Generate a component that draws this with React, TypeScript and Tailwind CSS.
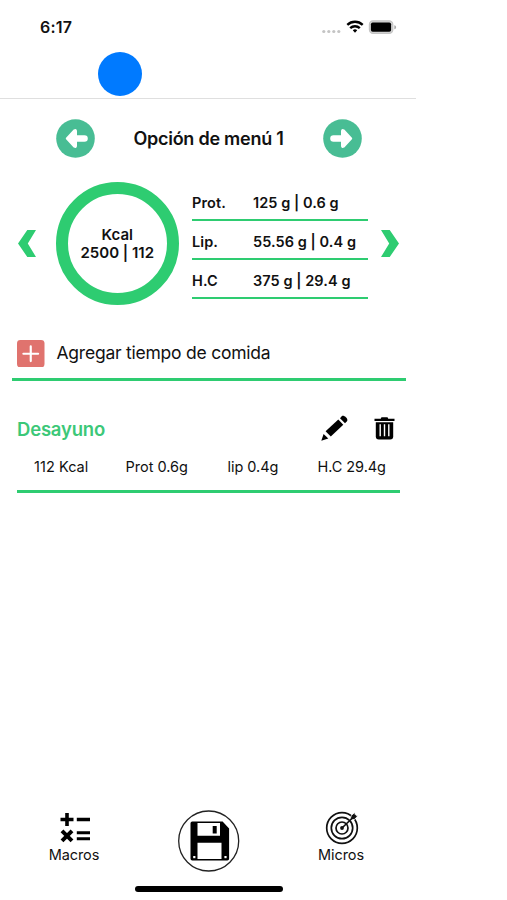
import React from "react";

function StatusBar() {
  return (
    <div className="flex h-[52px] items-start justify-between pt-[17px] pr-[19px] pl-[40px]">
      <span className="text-[16px] leading-[20px] font-semibold tracking-[0.2px]">6:17</span>
      <svg className="mt-[1px] h-[18px] w-[76px]" viewBox="0 0 76 18">
        <g fill="#c4c4c4">
          <circle cx="2.8" cy="13.5" r="1.6" />
          <circle cx="7.8" cy="13.5" r="1.6" />
          <circle cx="12.8" cy="13.5" r="1.6" />
          <circle cx="17.8" cy="13.5" r="1.6" />
        </g>
        <g fill="none" stroke="#000" strokeWidth="2.4">
          <path d="M26.3 6.8a11.3 11.3 0 0 1 15.4 0" />
          <path d="M29.2 10.1a7 7 0 0 1 9.6 0" />
        </g>
        <path d="M31.8 12.3a3.3 3.3 0 0 1 4.4 0L34 14.8z" fill="#000" />
        <rect x="48.4" y="2.9" width="23.4" height="12.4" rx="3.6" fill="#d4d4d4" stroke="#c4c4c4" strokeWidth="1.2" />
        <rect x="49.9" y="4.5" width="20.2" height="9.2" rx="1.8" fill="#000" />
        <path d="M73.3 7.2v4c1.3-.4 1.8-1.1 1.8-2s-.5-1.6-1.8-2z" fill="#aaa" />
      </svg>
    </div>
  );
}

function ArrowButton({ right = false }: { right?: boolean }) {
  return (
    <svg className={right ? "h-[39px] w-[39px] rotate-180" : "h-[39px] w-[39px]"} viewBox="0 0 39 39">
      <circle cx="19.5" cy="19.5" r="19.3" fill="#48bd94" />
      <path
        d="M10.8 19.5l7.6-8.2q1.6-.8 1.6 1v4.9h8.5a2.3 2.3 0 0 1 0 4.6H20v4.900q0 1.800-1.600 1z"
        fill="#fff"
        stroke="#fff"
        strokeWidth="2"
        strokeLinejoin="round"
      />
    </svg>
  );
}

function Chevron({ right = false }: { right?: boolean }) {
  return (
    <svg className={right ? "h-[27px] w-[18px] rotate-180" : "h-[27px] w-[18px]"} viewBox="0 0 18 27">
      <path d="M9.3 0H18L9.8 13.5 18 27H9.3L0 13.5z" fill="#2ecc71" />
    </svg>
  );
}

const macros = [
  { label: "Prot.", value: "125 g | 0.6 g" },
  { label: "Lip.", value: "55.56 g | 0.4 g" },
  { label: "H.C", value: "375 g | 29.4 g" },
];

function Summary() {
  return (
    <div className="flex h-[124px] items-center pl-[18px]">
      <Chevron />
      <div className="ml-[19.5px] flex h-[123.5px] w-[123.5px] flex-col items-center justify-center rounded-full border-[12.5px] border-[#2ecc71] text-[15px] leading-[18px] font-semibold">
        <span>Kcal</span>
        <span className="whitespace-nowrap">2500 | 112</span>
      </div>
      <div className="ml-[13px] flex w-[176px] flex-col pb-[7px]">
        {macros.map((m) => (
          <div key={m.label} className="flex h-[39px] items-center border-b-[2.5px] border-[#2ecc71] pt-[6px] text-[14.5px] font-semibold">
            <span className="w-[61px] tracking-[0.1px]">{m.label}</span>
            <span className="tracking-[0.06px] whitespace-nowrap">{m.value}</span>
          </div>
        ))}
      </div>
      <div className="ml-[13px] flex">
        <Chevron right />
      </div>
    </div>
  );
}

function Pencil() {
  return (
    <svg className="h-[26px] w-[27px]" viewBox="0 0 27 26">
      <path d="M4.6 16.2L17.3 4.6 22.3 9.8 9.8 21.6z" />
      <path d="M19 3.2l1.7-1.9c2-2 7.2 2.8 5.2 5L24 8.3z" />
      <path d="M2.6 19l4.7 4.4L.3 25.7z" />
    </svg>
  );
}

function Trash() {
  return (
    <svg className="h-[23px] w-[21px]" viewBox="0 0 21 23">
      <path d="M6.8 1.7Q6.8.3 8.2.3h4.6q1.4 0 1.4 1.4h6.3v2.4H.5V1.7z" />
      <path d="M1.8 5.2h17.4v14.3a3 3 0 0 1-3 3H4.8a3 3 0 0 1-3-3z" />
      <path d="M6.2 7.2v12.1M10.5 7.2v12.1M14.8 7.2v12.1" stroke="#fff" strokeWidth="1.4" />
    </svg>
  );
}

function MacrosIcon() {
  return (
    <svg className="h-[30px] w-[30px]" viewBox="0 0 30 30" stroke="#000" strokeWidth="3.6" fill="none">
      <path d="M0.5 6.500h13M7 0v13M16.8 6.500H30" />
      <path d="M2 17.8l10 10M12 17.8l-10 10" strokeWidth="4" />
      <path d="M16.8 19.8H30M16.8 25.7H30" strokeWidth="3.1" />
    </svg>
  );
}

function TargetIcon() {
  return (
    <svg className="h-[34px] w-[34px]" viewBox="0 0 34 34" fill="none" stroke="#111" strokeWidth="1.7">
      <circle cx="17" cy="17" r="15.3" />
      <circle cx="17" cy="17" r="10.7" />
      <circle cx="17" cy="17" r="6" />
      <circle cx="17" cy="17" r="1.9" fill="#111" stroke="none" />
      <path d="M25 9l1.3-4.6L29.8 1.5l.5 2.7 2.7.4-3.2 3.7z" fill="#111" stroke="#fff" strokeWidth=".8" />
      <path d="M17 17L30.5 4" />
    </svg>
  );
}

function SaveIcon() {
  return (
    <svg className="h-[62px] w-[62px]" viewBox="0 0 62 62">
      <circle cx="30.7" cy="31" r="30" fill="#fff" stroke="#222" strokeWidth="1.3" />
      <path d="M14.3 11.5h30.3l6.500 7v30.3a1.800 1.800 0 0 1-1.800 1.800H14.3a1.8 1.8 0 0 1-1.8-1.8V13.3a1.8 1.8 0 0 1 1.8-1.8z" />
      <path d="M19.500 13H42v12.800H19.500zM19.500 32.700h24v16.300h-24z" fill="#fff" />
      <rect x="34.700" y="16" width="4" height="7.5" />
      <rect x="15.2" y="46" width="2.2" height="2.2" fill="#fff" />
      <rect x="46.4" y="46" width="2.2" height="2.2" fill="#fff" />
    </svg>
  );
}

export default function App() {
  return (
    <div className="h-[900px] w-full overflow-hidden bg-white font-['Inter','Liberation_Sans',sans-serif] text-[#111]">
      <div className="flex h-full w-[416px] flex-col">
        <header className="h-[98.5px] shrink-0 border-b-[1.5px] border-[#dfdfdf]">
          <StatusBar />
          <div className="ml-[98px] h-[44px] w-[44px] rounded-full bg-[#007aff]" />
        </header>

        <div className="mt-[20.5px] flex h-[39px] items-center justify-between pr-[54.5px] pl-[55.5px]">
          <ArrowButton />
          <h1 className="text-[18px] font-semibold tracking-[-0.25px] whitespace-nowrap">Opción de menú 1</h1>
          <ArrowButton right />
        </div>

        <div className="mt-[23.5px]">
          <Summary />
        </div>

        <div className="mt-[24px] ml-[11.5px] flex h-[51px] w-[394.5px] items-center gap-[12px] border-b-[3px] border-[#2ecc71] pb-[1px] pl-[5.5px]">
          <svg className="mt-[1px] h-[27.5px] w-[27.5px]" viewBox="0 0 28 28">
            <rect width="28" height="28" rx="3.5" fill="#e0736e" />
            <path d="M14 6.5v15M6.5 14h15" stroke="#fff" strokeWidth="2.2" strokeLinecap="round" />
          </svg>
          <span className="text-[17.5px] tracking-[-0.23px] whitespace-nowrap">Agregar tiempo de comida</span>
        </div>

        <section className="mt-[33px] ml-[17px] h-[79px] w-[383px] border-b-[3px] border-[#2ecc71]">
          <div className="flex h-[28px] items-center pr-[5px]">
            <h2 className="flex-1 pt-[4px] text-[18.5px] font-semibold tracking-[-0.2px] text-[#3cc878]">Desayuno</h2>
            <Pencil />
            <div className="ml-[26px] pt-[1px]">
              <Trash />
            </div>
          </div>
          <div className="mt-[15.5px] flex pl-[17px] text-[14.5px] leading-[20px] whitespace-nowrap">
            <span className="w-[91.5px] tracking-[0.05px]">112 Kcal</span>
            <span className="w-[102px]">Prot 0.6g</span>
            <span className="w-[90px] tracking-[-0.05px]">lip 0.4g</span>
            <span className="tracking-[-0.05px]">H.C 29.4g</span>
          </div>
        </section>

        <nav className="mt-auto flex h-[90px] shrink-0 flex-col">
          <div className="flex h-[76px] text-[14.5px] leading-[18px]">
            <div className="ml-[24px] flex w-[100px] flex-col items-center pt-[3px]">
              <div className="pl-[1px]">
                <MacrosIcon />
              </div>
              <span className="mt-[2.5px] tracking-[-0.1px]">Macros</span>
            </div>
            <div className="ml-[53.5px]">
              <SaveIcon />
            </div>
            <div className="ml-[51.5px] flex w-[100px] flex-col items-center pt-[1px]">
              <div className="pl-[2px]">
                <TargetIcon />
              </div>
              <span className="mt-[0.5px] tracking-[-0.05px]">Micros</span>
            </div>
          </div>
          <div className="ml-[135px] h-[5.5px] w-[148px] rounded-full bg-black" />
        </nav>
      </div>
    </div>
  );
}
